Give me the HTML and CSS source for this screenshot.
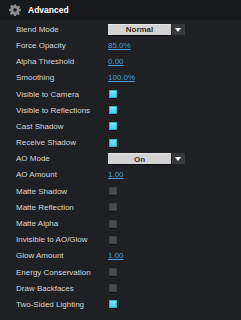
FILE: index.html
```
<!DOCTYPE html>
<html>
<head>
    <meta charset="UTF-8">
    <title>Advanced</title>
    <link rel="stylesheet" href="styles.css">
</head>
<body>
    <div class="panel">
        <div class="panel-head">
            <svg class="gear" width="12" height="12" viewBox="0 0 24 24">
                <path fill="#8c8c8c" d="M10 1h4l.6 3.2 2.2.9 2.7-1.9 2.8 2.8-1.9 2.7.9 2.2L24 10v4l-3.2.6-.9 2.2 1.9 2.7-2.8 2.8-2.7-1.9-2.2.9L14 24h-4l-.6-3.2-2.2-.9-2.7 1.9-2.8-2.8 1.9-2.7-.9-2.2L0 14v-4l3.2-.6.9-2.2L2.2 4.5 5 1.7l2.7 1.9 2.2-.9z"/>
                <circle cx="12" cy="12" r="3.6" fill="#18191c"/>
            </svg>
            <span class="title">Advanced</span>
        </div>

        <div class="rows">
            <div class="row">
                <span class="label">Blend Mode</span>
                <div class="select"><span class="select-box">Normal</span><span class="select-btn"></span></div>
            </div>
            <div class="row"><span class="label">Force Opacity</span><a class="value">85.0%</a></div>
            <div class="row"><span class="label">Alpha Threshold</span><a class="value">0.00</a></div>
            <div class="row"><span class="label">Smoothing</span><a class="value">100.0%</a></div>
            <div class="row"><span class="label">Visible to Camera</span><span class="check on"></span></div>
            <div class="row"><span class="label">Visible to Reflections</span><span class="check on"></span></div>
            <div class="row"><span class="label">Cast Shadow</span><span class="check on"></span></div>
            <div class="row"><span class="label">Receive Shadow</span><span class="check on"></span></div>
            <div class="row">
                <span class="label">AO Mode</span>
                <div class="select"><span class="select-box">On</span><span class="select-btn"></span></div>
            </div>
            <div class="row"><span class="label">AO Amount</span><a class="value">1.00</a></div>
            <div class="row"><span class="label">Matte Shadow</span><span class="check"></span></div>
            <div class="row"><span class="label">Matte Reflection</span><span class="check"></span></div>
            <div class="row"><span class="label">Matte Alpha</span><span class="check"></span></div>
            <div class="row"><span class="label">Invisible to AO/Glow</span><span class="check"></span></div>
            <div class="row"><span class="label">Glow Amount</span><a class="value">1.00</a></div>
            <div class="row"><span class="label">Energy Conservation</span><span class="check"></span></div>
            <div class="row"><span class="label">Draw Backfaces</span><span class="check"></span></div>
            <div class="row"><span class="label">Two-Sided Lighting</span><span class="check on"></span></div>
        </div>
    </div>
</body>
</html>
```

FILE: styles.css
```
body {
    margin: 0;
    background-color: #1f2024;
    font-family: "Liberation Sans", Arial, sans-serif;
    font-size: 8px;
    color: #d6d6d6;
}

.panel {
    width: 241px;
    height: 320px;
    background-color: #1f2024;
}

.panel-head {
    height: 20px;
    display: flex;
    align-items: center;
    padding-left: 9px;
    background-color: #18191c;
}

.gear {
    margin-right: 7px;
}

.title {
    font-weight: bold;
    font-size: 8.5px;
    color: #ffffff;
}

.rows {
    padding-top: 1.2px;
}

.row {
    height: 16.2px;
    display: flex;
    align-items: center;
}

.label {
    width: 92px;
    padding-left: 16px;
    white-space: nowrap;
}

.value {
    color: #4c9fd6;
    text-decoration: underline;
}

/* dropdown */
.select {
    display: flex;
    height: 11px;
}

.select-box {
    width: 63px;
    display: flex;
    align-items: center;
    justify-content: center;
    background-color: #d3d3d3;
    border-top: 1px solid #e6e6e6;
    box-shadow: 0 1px 0 #0c0c0d;
    color: #3a2e2a;
    font-weight: bold;
    font-size: 8px;
    box-sizing: border-box;
}

.select-btn {
    width: 13px;
    margin-left: 1px;
    background-color: #38393c;
    position: relative;
}

.select-btn::after {
    content: "";
    position: absolute;
    left: 3px;
    top: 4px;
    border-left: 3.5px solid transparent;
    border-right: 3.5px solid transparent;
    border-top: 4px solid #ffffff;
}

/* checkbox */
.check {
    width: 8px;
    height: 8px;
    margin-left: 1px;
    box-sizing: border-box;
    border: 1px solid #3e3f42;
    background-color: #4a4b4e;
    box-shadow: 0 1px 0 #111214;
}

.check.on {
    border-color: #3eaec8;
    background-color: #5ad9f2;
    background-image: linear-gradient(#7ce6fa, #4ccfec);
}
```
